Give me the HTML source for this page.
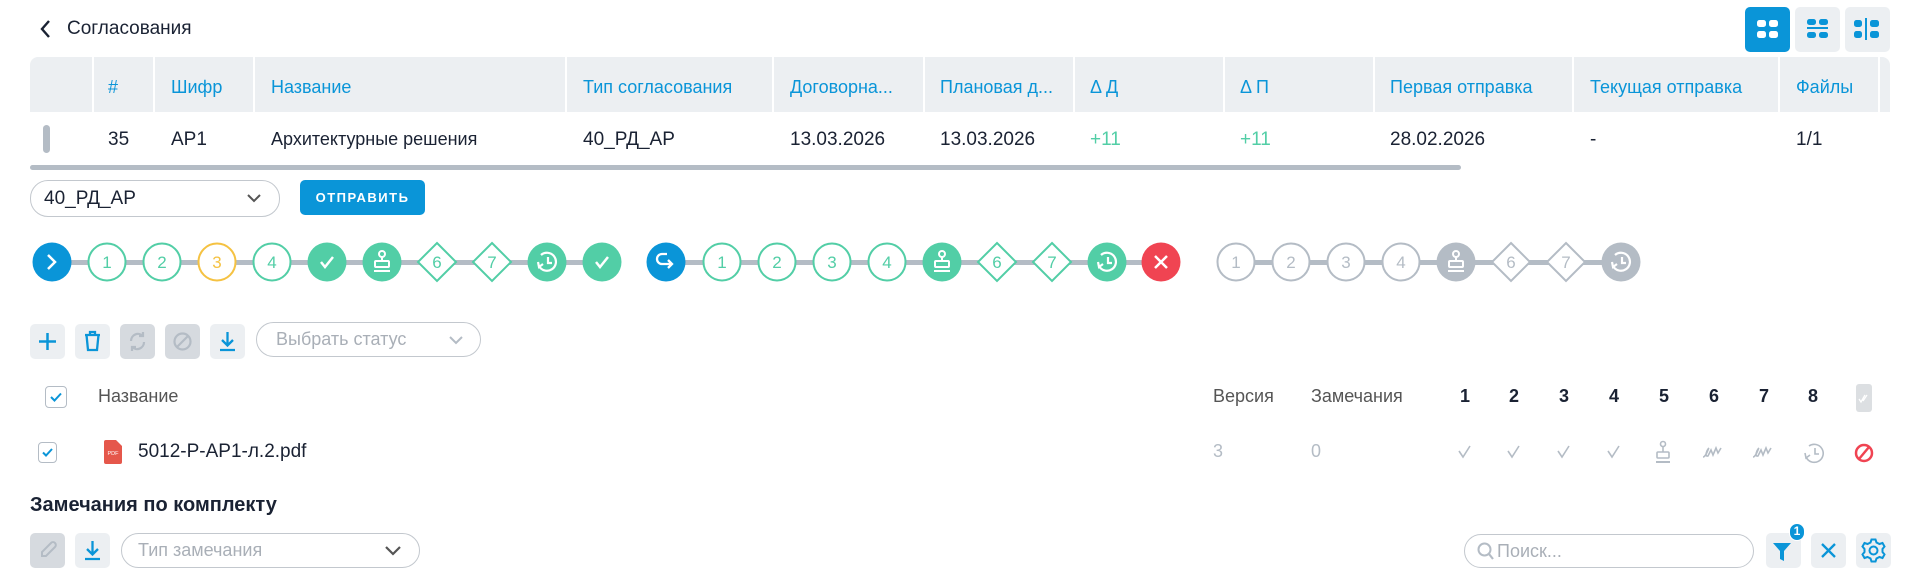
<!DOCTYPE html>
<html><head><meta charset="utf-8">
<style>
*{box-sizing:border-box;margin:0;padding:0}
body{width:1912px;height:576px;background:#fff;font-family:"Liberation Sans","Noto Sans CJK SC",sans-serif;color:#1a2233;position:relative;overflow:hidden}
.a{position:absolute;white-space:nowrap}
.hd{position:absolute;top:57px;height:55px;background:#eceff2;border-right:2px solid #fff}
.ht{position:absolute;top:77px;font-size:18px;color:#0a95d8}
.rt{position:absolute;top:129px;color:#1a2233;font-family:"Liberation Sans Narrow","Liberation Sans",sans-serif;font-size:19px}
.btn{position:absolute;width:35px;height:35px;border-radius:5px;background:#eceff2}
.btn.dis{background:#d6dadf}
.sel{position:absolute;border:1px solid #c3c8ce;border-radius:18px;color:#a9afb7;font-size:18px}
.num{position:absolute;top:386px;font-size:18px;font-weight:bold;color:#1a2233;font-family:"Liberation Sans Narrow","Liberation Sans",sans-serif}
</style></head><body>

<svg class="a" style="left:38px;top:18px" width="16" height="22" viewBox="0 0 16 22"><path d="M11 3 L4 11 L11 19" fill="none" stroke="#1a2233" stroke-width="2.4"/></svg>
<div class="a" style="left:67px;top:18px;font-size:19px;font-family:'Liberation Sans Narrow','Liberation Sans',sans-serif">Согласования</div>

<div class="btn" style="left:1745px;top:7px;width:45px;height:45px;background:#0a95d8"></div>
<svg class="a" style="left:1745px;top:7px" width="45" height="45"><g fill="#fff"><rect x="12" y="13" width="9" height="7" rx="2.5"/><rect x="24" y="13" width="9" height="7" rx="2.5"/><rect x="12" y="24" width="9" height="7" rx="2.5"/><rect x="24" y="24" width="9" height="7" rx="2.5"/></g></svg>
<div class="btn" style="left:1795px;top:7px;width:45px;height:45px"></div>
<svg class="a" style="left:1795px;top:7px" width="45" height="45"><g fill="#0a95d8"><rect x="12" y="12" width="9" height="6" rx="2.5"/><rect x="24" y="12" width="9" height="6" rx="2.5"/><rect x="12" y="20" width="21" height="2"/><rect x="12" y="25" width="9" height="6" rx="2.5"/><rect x="24" y="25" width="9" height="6" rx="2.5"/></g></svg>
<div class="btn" style="left:1845px;top:7px;width:45px;height:45px"></div>
<svg class="a" style="left:1845px;top:7px" width="45" height="45"><g fill="#0a95d8"><rect x="9" y="13" width="8" height="7" rx="2.5"/><rect x="9" y="24" width="8" height="7" rx="2.5"/><rect x="20" y="11" width="2" height="22"/><rect x="25" y="13" width="9" height="7" rx="2.5"/><rect x="25" y="24" width="9" height="7" rx="2.5"/></g></svg>

<div class="hd" style="left:30px;width:64px;border-radius:8px 0 0 0"></div>
<div class="hd" style="left:94px;width:61px"></div>
<div class="hd" style="left:155px;width:100px"></div>
<div class="hd" style="left:255px;width:312px"></div>
<div class="hd" style="left:567px;width:207px"></div>
<div class="hd" style="left:774px;width:151px"></div>
<div class="hd" style="left:925px;width:150px"></div>
<div class="hd" style="left:1075px;width:150px"></div>
<div class="hd" style="left:1225px;width:150px"></div>
<div class="hd" style="left:1375px;width:199px"></div>
<div class="hd" style="left:1574px;width:206px"></div>
<div class="hd" style="left:1780px;width:100px"></div>
<div class="hd" style="left:1880px;width:10px;border-radius:0 8px 0 0;border:none"></div>
<div class="ht" style="left:108px">#</div>
<div class="ht" style="left:171px">Шифр</div>
<div class="ht" style="left:271px">Название</div>
<div class="ht" style="left:583px">Тип согласования</div>
<div class="ht" style="left:790px">Договорна...</div>
<div class="ht" style="left:940px">Плановая д...</div>
<div class="ht" style="left:1090px">Δ Д</div>
<div class="ht" style="left:1240px">Δ П</div>
<div class="ht" style="left:1390px">Первая отправка</div>
<div class="ht" style="left:1590px">Текущая отправка</div>
<div class="ht" style="left:1796px">Файлы</div>

<div class="a" style="left:43px;top:125px;width:7px;height:28px;border-radius:4px;background:#b4bcc5"></div>
<div class="rt" style="left:108px">35</div>
<div class="rt" style="left:171px">АР1</div>
<div class="rt" style="left:271px;font-family:'Liberation Sans',sans-serif;font-size:18px">Архитектурные решения</div>
<div class="rt" style="left:583px">40_РД_АР</div>
<div class="rt" style="left:790px">13.03.2026</div>
<div class="rt" style="left:940px">13.03.2026</div>
<div class="rt" style="left:1090px;color:#52cea6">+11</div>
<div class="rt" style="left:1240px;color:#52cea6">+11</div>
<div class="rt" style="left:1390px">28.02.2026</div>
<div class="rt" style="left:1590px">-</div>
<div class="rt" style="left:1796px">1/1</div>
<div class="a" style="left:30px;top:165px;width:1431px;height:5px;border-radius:3px;background:#b4bcc5"></div>

<div class="sel" style="left:30px;top:180px;width:250px;height:37px;color:#1a2233;font-family:'Liberation Sans Narrow','Liberation Sans',sans-serif;font-size:19px;padding:7px 0 0 13px">40_РД_АР</div>
<svg class="a" style="left:246px;top:192px" width="16" height="12"><path d="M2 3 L8 9 L14 3" fill="none" stroke="#555" stroke-width="2"/></svg>
<div class="a" style="left:300px;top:180px;width:125px;height:35px;border-radius:5px;background:#0a95d8;color:#fff;font-size:13px;font-weight:bold;letter-spacing:1.5px;text-align:center;line-height:35px">ОТПРАВИТЬ</div>

<svg class="a" style="left:0;top:230px" width="1700" height="64" viewBox="0 230 1700 64" font-family="Liberation Sans Narrow, Liberation Sans, sans-serif" font-size="17" text-anchor="middle">
<defs>
<g id="stamp" fill="none" stroke="#fff" stroke-width="2"><circle cx="0" cy="-9" r="3"/><path d="M0 -6 V-2"/><rect x="-7" y="-2" width="14" height="6" rx="1"/><path d="M-8 8 H8"/></g>
<g id="clk" fill="none" stroke="#fff" stroke-width="2.2"><path d="M-6 -7 A9 9 0 1 1 -8 4"/><path d="M-9 0 L-8 5 L-4 2"/><path d="M1 -5 V1 H5"/></g>
<path id="chk" d="M-6 0 L-2 5 L6 -5" fill="none" stroke="#fff" stroke-width="2.5"/>
</defs>
<g fill="#b4bcc5"><rect x="52" y="260" width="550" height="5"/><rect x="666" y="260" width="495" height="5"/><rect x="1236" y="260" width="385" height="5"/></g>
<circle cx="52" cy="262" r="19.5" fill="#0a95d8"/><path d="M48 255 L55 262 L48 269" fill="none" stroke="#fff" stroke-width="2.5"/>
<g fill="#fff" stroke-width="2"><circle cx="107" cy="262" r="18.5" stroke="#52cea6"/><circle cx="162" cy="262" r="18.5" stroke="#52cea6"/><circle cx="217" cy="262" r="18.5" stroke="#f5c242"/><circle cx="272" cy="262" r="18.5" stroke="#52cea6"/></g>
<text x="107" y="268" fill="#52cea6">1</text><text x="162" y="268" fill="#52cea6">2</text><text x="217" y="268" fill="#f5c242">3</text><text x="272" y="268" fill="#52cea6">4</text>
<circle cx="327" cy="262" r="19.5" fill="#52cea6"/><use href="#chk" x="327" y="262"/>
<circle cx="382" cy="262" r="19.5" fill="#52cea6"/><use href="#stamp" x="382" y="263"/>
<path d="M437 243 L456 262 L437 281 L418 262 Z" fill="#fff" stroke="#52cea6" stroke-width="2"/><text x="437" y="268" fill="#52cea6">6</text>
<path d="M492 243 L511 262 L492 281 L473 262 Z" fill="#fff" stroke="#52cea6" stroke-width="2"/><text x="492" y="268" fill="#52cea6">7</text>
<circle cx="547" cy="262" r="19.5" fill="#52cea6"/><use href="#clk" x="547" y="262"/>
<circle cx="602" cy="262" r="19.5" fill="#52cea6"/><use href="#chk" x="602" y="262"/>
<circle cx="666" cy="262" r="19.5" fill="#0a95d8"/><path d="M667 254 H662 A5 5 0 0 0 662 264 H672 M668 260 L672 264 L668 268" fill="none" stroke="#fff" stroke-width="2.3"/>
<g fill="#fff" stroke-width="2" stroke="#52cea6"><circle cx="722" cy="262" r="18.5"/><circle cx="777" cy="262" r="18.5"/><circle cx="832" cy="262" r="18.5"/><circle cx="887" cy="262" r="18.5"/></g>
<g fill="#52cea6"><text x="722" y="268">1</text><text x="777" y="268">2</text><text x="832" y="268">3</text><text x="887" y="268">4</text></g>
<circle cx="942" cy="262" r="19.5" fill="#52cea6"/><use href="#stamp" x="942" y="263"/>
<path d="M997 243 L1016 262 L997 281 L978 262 Z" fill="#fff" stroke="#52cea6" stroke-width="2"/><text x="997" y="268" fill="#52cea6">6</text>
<path d="M1052 243 L1071 262 L1052 281 L1033 262 Z" fill="#fff" stroke="#52cea6" stroke-width="2"/><text x="1052" y="268" fill="#52cea6">7</text>
<circle cx="1107" cy="262" r="19.5" fill="#52cea6"/><use href="#clk" x="1107" y="262"/>
<circle cx="1161" cy="262" r="19.5" fill="#f04452"/><path d="M1155 256 L1167 268 M1167 256 L1155 268" stroke="#fff" stroke-width="2.5"/>
<g fill="#fff" stroke-width="2" stroke="#b4bcc5"><circle cx="1236" cy="262" r="18.5"/><circle cx="1291" cy="262" r="18.5"/><circle cx="1346" cy="262" r="18.5"/><circle cx="1401" cy="262" r="18.5"/></g>
<g fill="#b4bcc5"><text x="1236" y="268">1</text><text x="1291" y="268">2</text><text x="1346" y="268">3</text><text x="1401" y="268">4</text></g>
<circle cx="1456" cy="262" r="19.5" fill="#b4bcc5"/><use href="#stamp" x="1456" y="263"/>
<path d="M1511 243 L1530 262 L1511 281 L1492 262 Z" fill="#fff" stroke="#b4bcc5" stroke-width="2"/><text x="1511" y="268" fill="#b4bcc5">6</text>
<path d="M1566 243 L1585 262 L1566 281 L1547 262 Z" fill="#fff" stroke="#b4bcc5" stroke-width="2"/><text x="1566" y="268" fill="#b4bcc5">7</text>
<circle cx="1621" cy="262" r="19.5" fill="#b4bcc5"/><use href="#clk" x="1621" y="262"/>
</svg>

<div class="btn" style="left:30px;top:324px"></div>
<svg class="a" style="left:30px;top:324px" width="35" height="35"><path d="M17.5 9 V26 M9 17.5 H26" stroke="#0a95d8" stroke-width="2.5"/></svg>
<div class="btn" style="left:75px;top:324px"></div>
<svg class="a" style="left:75px;top:324px" width="35" height="35"><path d="M10 11 H25 M15 11 V8 H20 V11 M11.5 11 L13 26 H22 L23.5 11" fill="none" stroke="#0a95d8" stroke-width="2.3"/></svg>
<div class="btn dis" style="left:120px;top:324px"></div>
<svg class="a" style="left:120px;top:324px" width="35" height="35"><path d="M11 17 A7 7 0 0 1 23 12 M24 18 A7 7 0 0 1 12 23 M23 8 V12 H19 M12 27 V23 H16" fill="none" stroke="#b4bcc5" stroke-width="2.2"/></svg>
<div class="btn dis" style="left:165px;top:324px"></div>
<svg class="a" style="left:165px;top:324px" width="35" height="35"><circle cx="17.5" cy="17.5" r="8" fill="none" stroke="#b4bcc5" stroke-width="2.2"/><path d="M12 23 L23 12" stroke="#b4bcc5" stroke-width="2.2"/></svg>
<div class="btn" style="left:210px;top:324px"></div>
<svg class="a" style="left:210px;top:324px" width="35" height="35"><path d="M17.5 8 V21 M12 16 L17.5 21.5 L23 16 M10 26 H25" fill="none" stroke="#0a95d8" stroke-width="2.3"/></svg>
<div class="sel" style="left:256px;top:322px;width:225px;height:35px;padding:6px 0 0 19px">Выбрать статус</div>
<svg class="a" style="left:448px;top:334px" width="16" height="12"><path d="M2 3 L8 9 L14 3" fill="none" stroke="#b4bcc5" stroke-width="2"/></svg>

<div class="a" style="left:45px;top:386px;width:22px;height:22px;border:1.5px solid #b4bcc5;border-radius:4px"></div>
<svg class="a" style="left:45px;top:386px" width="22" height="22"><path d="M6 11 L9.5 14.5 L16 7.5" fill="none" stroke="#0a95d8" stroke-width="2"/></svg>
<div class="a" style="left:98px;top:386px;font-size:18px;color:#555">Название</div>
<div class="a" style="left:1213px;top:386px;font-size:18px;color:#555;font-family:'Liberation Sans Narrow','Liberation Sans',sans-serif">Версия</div>
<div class="a" style="left:1311px;top:386px;font-size:18px;color:#555;font-family:'Liberation Sans Narrow','Liberation Sans',sans-serif">Замечания</div>
<div class="num" style="left:1460px">1</div><div class="num" style="left:1509px">2</div><div class="num" style="left:1559px">3</div><div class="num" style="left:1609px">4</div><div class="num" style="left:1659px">5</div><div class="num" style="left:1709px">6</div><div class="num" style="left:1759px">7</div><div class="num" style="left:1808px">8</div>
<div class="a" style="left:1856px;top:384px;width:16px;height:28px;border-radius:3px;background:#dcdfe2"></div>
<svg class="a" style="left:1856px;top:384px" width="16" height="28"><path d="M3 15 L5 18 L9 11 M7 17 L11 11" fill="none" stroke="#fff" stroke-width="1.3"/></svg>

<div class="a" style="left:38px;top:442px;width:19px;height:21px;border:1.5px solid #b4bcc5;border-radius:4px"></div>
<svg class="a" style="left:38px;top:442px" width="19" height="21"><path d="M5 10.5 L8 13.5 L14 7" fill="none" stroke="#0a95d8" stroke-width="2"/></svg>
<svg class="a" style="left:104px;top:440px" width="18" height="24"><path d="M2 0 H12 L18 6 V22 A2 2 0 0 1 16 24 H2 A2 2 0 0 1 0 22 V2 A2 2 0 0 1 2 0Z" fill="#e5574b"/><text x="9" y="15" font-size="5.5" fill="#fff" text-anchor="middle" font-family="Liberation Sans">PDF</text></svg>
<div class="a" style="left:138px;top:441px;font-size:19px">5012-Р-АР1-л.2.pdf</div>
<div class="a" style="left:1213px;top:441px;font-size:18px;color:#b4bcc5">3</div>
<div class="a" style="left:1311px;top:441px;font-size:18px;color:#b4bcc5">0</div>
<svg class="a" style="left:1450px;top:436px" width="440" height="34" fill="none" stroke="#b4bcc5" stroke-width="1.6">
<path d="M9 15 L13 21 L20 10"/><path d="M58 15 L62 21 L69 10"/><path d="M108 15 L112 21 L119 10"/><path d="M158 15 L162 21 L169 10"/>
<g transform="translate(213 17)"><circle cx="0" cy="-9" r="2.5"/><path d="M0 -6 V-1"/><rect x="-6" y="-1" width="12" height="6" rx="1"/><path d="M-7 9 H7" stroke-width="2"/></g>
<path d="M253 21 C256 21 258 13 259 12 C257 14 254 21 258 20 L261 14 L263 19 L266 12 L268 17 L271 12"/>
<path d="M303 21 C306 21 308 13 309 12 C307 14 304 21 308 20 L311 14 L313 19 L316 12 L318 17 L321 12"/>
<g transform="translate(364 17)"><path d="M-5 -7 A9 9 0 1 1 -8 4"/><path d="M-9 0 L-8 5 L-4 2"/><path d="M1 -5 V1 H5"/></g>
<g transform="translate(414 17)" stroke="#f04452" stroke-width="2.5"><circle r="8"/><path d="M-5 6 L5 -6"/></g>
</svg>

<div class="a" style="left:30px;top:494px;font-size:20px;font-weight:bold;color:#1a2233">Замечания по комплекту</div>
<div class="btn dis" style="left:30px;top:533px"></div>
<svg class="a" style="left:30px;top:533px" width="35" height="35"><path d="M12 23 L12 19 L21 10 A2 2 0 0 1 25 14 L16 23 Z" fill="none" stroke="#b4bcc5" stroke-width="2"/></svg>
<div class="btn" style="left:75px;top:533px"></div>
<svg class="a" style="left:75px;top:533px" width="35" height="35"><path d="M17.5 8 V21 M12 16 L17.5 21.5 L23 16 M10 26 H25" fill="none" stroke="#0a95d8" stroke-width="2.3"/></svg>
<div class="sel" style="left:121px;top:533px;width:299px;height:35px;padding:6px 0 0 16px">Тип замечания</div>
<svg class="a" style="left:384px;top:545px" width="18" height="12"><path d="M2 2 L9 9 L16 2" fill="none" stroke="#555" stroke-width="2.2"/></svg>

<div class="sel" style="left:1464px;top:534px;width:290px;height:34px;padding:6px 0 0 32px">Поиск...</div>
<svg class="a" style="left:1477px;top:542px" width="18" height="20"><circle cx="7.5" cy="7.5" r="6" fill="none" stroke="#b4bcc5" stroke-width="2"/><path d="M12 12 L16 17" stroke="#b4bcc5" stroke-width="2.2"/></svg>
<div class="btn" style="left:1766px;top:533px"></div>
<svg class="a" style="left:1766px;top:533px" width="35" height="35"><path d="M7 10 H25 L18 18 V28 L14 26 V18 Z" fill="#0a95d8"/></svg>
<div class="a" style="left:1789px;top:523px;width:16px;height:18px;border-radius:9px;background:#0a95d8;border:1.5px solid #fff;color:#fff;font-size:12px;font-weight:bold;text-align:center;line-height:15px">1</div>
<div class="btn" style="left:1811px;top:533px"></div>
<svg class="a" style="left:1811px;top:533px" width="35" height="35"><path d="M11 11 L24 24 M24 11 L11 24" stroke="#0a95d8" stroke-width="2.3"/></svg>
<div class="btn" style="left:1856px;top:533px"></div>
<svg class="a" style="left:1856px;top:533px" width="35" height="35"><g transform="translate(17.5 17.5)" fill="none" stroke="#0a95d8" stroke-width="2"><circle r="4"/><path d="M-2 -11 H2 L3 -8 L6 -6.5 L9 -7.5 L11 -4 L9 -1.5 V1.5 L11 4 L9 7.5 L6 6.5 L3 8 L2 11 H-2 L-3 8 L-6 6.5 L-9 7.5 L-11 4 L-9 1.5 V-1.5 L-11 -4 L-9 -7.5 L-6 -6.5 L-3 -8 Z"/></g></svg>
</body></html>
